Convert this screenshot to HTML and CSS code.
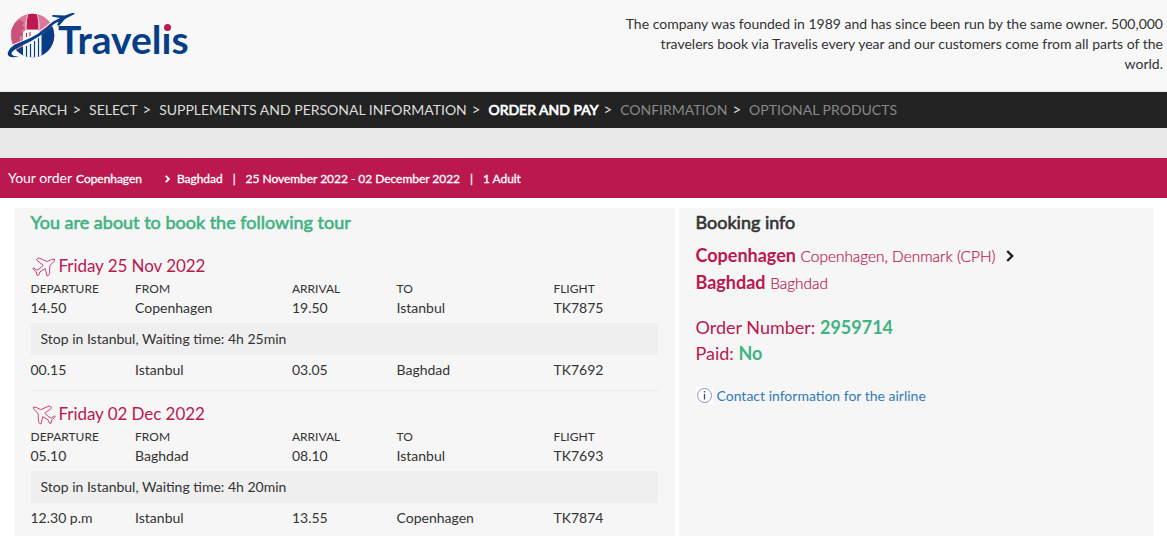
FILE: index.html
```
<!DOCTYPE html>
<html lang="en">
<head>
    <meta charset="UTF-8">
    <meta name="viewport" content="width=device-width, initial-scale=1.0">
    <title>Travelis - Order and pay</title>
    <link rel="stylesheet" href="styles.css">
</head>
<body>

<svg class="symbols" width="0" height="0">
    <symbol id="plane" viewBox="0 0 24 20">
        <path d="M0.8 11.5 Q1 10.6 2 11 L4.5 13 L6.8 12.2 L11.2 8.3 L4.5 3 Q5 0.8 7 1 L15.2 4.6 Q20 1.8 22.5 2 Q23.5 3.5 20 6.5 L17.8 8.5 L17.5 16.5 Q16.8 19 15 19 L13.2 11.6 L8 14.8 L6.6 18.2 L5 18.3 L4.2 15 Z"/>
    </symbol>
    <symbol id="chevron" viewBox="0 0 8 12">
        <path d="M1.2 1 L6.2 6 L1.2 11"/>
    </symbol>
</svg>

<header class="header">
    <a class="logo" href="#">
        <svg class="logo-mark" width="70" height="50" viewBox="0 0 70 50">
            <defs>
                <clipPath id="globe"><circle cx="25.5" cy="25.5" r="21.8"/></clipPath>
            </defs>
            <g clip-path="url(#globe)">
                <rect x="3" y="3" width="46" height="46" fill="#d97898"/>
                <path d="M4 20 L8 13 L13 10 L17 12 L15 16 L18 18 L14 21 L17 25 L12 27 L13 32 L6 36 Z" fill="#c9517b"/>
                <path d="M20 3 L31 3 L32 19 L19 19 Z" fill="#bd1a50"/>
                <path d="M21 3 Q18.5 10 19 20 M30 3 Q32.5 10 32 20" fill="none" stroke="#f8f8f8" stroke-width="0.9"/>
                <path d="M7 41 Q28 32 50 12 L50 50 L7 50 Z" fill="#053d87"/>
                <path d="M16 48 L16 23 Q17 20 20 20 L31 20 L34.5 23 L34.5 48 Z" fill="#f8f8f8"/>
                <path d="M19.5 23 V27 M23 22 V27" stroke="#bd1a50" stroke-width="1"/>
                <path d="M19.5 36 V47 M23.5 34 V47 M27.5 31 V47 M31.5 28 V47" stroke="#053d87" stroke-width="1.2"/>
                <path d="M4 35.5 Q28 27 48 9" fill="none" stroke="#f8f8f8" stroke-width="1"/>
            </g>
            <path d="M12 46.5 Q0 49 0.8 42.5 Q3 36 13 32.5 Q33 25 46 11.5 L53 8 L45 6.5 L45.5 5 L58 5.5 L65 3 Q68.5 2.5 67.5 4 L58 9 L52.5 15.5 L50 15.5 L51.5 11.5 L47 14 Q34 27.5 14 36 Q3.5 41.5 4.5 44 Q5.5 46.5 12 46.5 Z" fill="#053d87"/>
        </svg>
        <span class="logo-text">Travel<span class="logo-i">ı</span>s</span>
    </a>
    <p class="intro">The company was founded in 1989 and has since been run by the same owner. 500,000<br>travelers book via Travelis every year and our customers come from all parts of the<br>world.</p>
</header>

<nav class="steps">
    <span class="step">SEARCH</span>
    <span class="step">SELECT</span>
    <span class="step">SUPPLEMENTS AND PERSONAL INFORMATION</span>
    <span class="step active">ORDER AND PAY</span>
    <span class="step disabled">CONFIRMATION</span>
    <span class="step disabled">OPTIONAL PRODUCTS</span>
</nav>

<div class="order-bar">
    <span class="order-title">Your order</span>
    <span>Copenhagen</span>
    <svg class="chevron chevron-small"><use href="#chevron"/></svg>
    <span>Baghdad</span>
    <span class="divider">|</span>
    <span>25 November 2022 - 02 December 2022</span>
    <span class="divider">|</span>
    <span>1 Adult</span>
</div>

<main class="content">
    <section class="panel tour">
        <h2 class="tour-title">You are about to book the following tour</h2>

        <div class="trip">
            <h3 class="trip-date"><svg class="plane"><use href="#plane"/></svg>Friday 25 Nov 2022</h3>
            <div class="row row-head">
                <span>DEPARTURE</span><span>FROM</span><span>ARRIVAL</span><span>TO</span><span>FLIGHT</span>
            </div>
            <div class="row">
                <span>14.50</span><span>Copenhagen</span><span>19.50</span><span>Istanbul</span><span>TK7875</span>
            </div>
            <div class="stop">Stop in Istanbul, Waiting time: 4h 25min</div>
            <div class="row">
                <span>00.15</span><span>Istanbul</span><span>03.05</span><span>Baghdad</span><span>TK7692</span>
            </div>
        </div>

        <div class="trip">
            <h3 class="trip-date"><svg class="plane plane-return"><use href="#plane"/></svg>Friday 02 Dec 2022</h3>
            <div class="row row-head">
                <span>DEPARTURE</span><span>FROM</span><span>ARRIVAL</span><span>TO</span><span>FLIGHT</span>
            </div>
            <div class="row">
                <span>05.10</span><span>Baghdad</span><span>08.10</span><span>Istanbul</span><span>TK7693</span>
            </div>
            <div class="stop">Stop in Istanbul, Waiting time: 4h 20min</div>
            <div class="row">
                <span>12.30 p.m</span><span>Istanbul</span><span>13.55</span><span>Copenhagen</span><span>TK7874</span>
            </div>
        </div>
    </section>

    <aside class="panel booking">
        <h2 class="booking-title">Booking info</h2>
        <div class="place"><strong>Copenhagen</strong> <small>Copenhagen, Denmark (CPH)</small><svg class="chevron"><use href="#chevron"/></svg></div>
        <div class="place"><strong>Baghdad</strong> <small>Baghdad</small></div>
        <div class="order-info">
            <div>Order Number: <b>2959714</b></div>
            <div>Paid: <b>No</b></div>
        </div>
        <a class="contact" href="#">
            <svg class="info-icon" width="17" height="17" viewBox="0 0 17 17">
                <rect width="17" height="17" fill="#fff"/>
                <circle cx="8.5" cy="8.5" r="7" fill="none" stroke="#8292c8" stroke-width="1"/>
                <path d="M8.5 4 V5.5 M8.5 7 V12.5" fill="none" stroke="#2c4c9c" stroke-width="1.3"/>
            </svg>
            <span>Contact information for the airline</span>
        </a>
    </aside>
</main>

</body>
</html>
```
FILE: styles.css
```
* {
    box-sizing: border-box;
}
body {
    font-family: Lato, "Liberation Sans", sans-serif;
    font-size: 14px;
    line-height: 20px;
    color: #333;
    background-color: #fff;
    margin: 0;
    height: 536px;
    overflow: hidden;
}
h2, h3, p {
    margin: 0;
}
a {
    text-decoration: none;
}
.symbols {
    display: block;
}
.header {
    display: flex;
    justify-content: space-between;
    height: 92px;
    padding: 0 4px 0 7px;
    background-color: #f8f8f8;
    border-bottom: 1px solid #e7e7e7;
}
.logo {
    display: flex;
    padding-top: 10px;
}
.logo-mark {
    display: block;
    margin-right: -19px;
}
.logo-text {
    font-size: 39px;
    line-height: 59px;
    font-weight: bold;
    color: #053d87;
    white-space: nowrap;
}
.logo-i {
    position: relative;
}
.logo-i::after {
    content: "";
    position: absolute;
    left: 2px;
    top: 8px;
    width: 7px;
    height: 7px;
    border-radius: 50%;
    background-color: #bd1a50;
}
.intro {
    padding-top: 14px;
    text-align: right;
    white-space: nowrap;
}
.steps {
    display: flex;
    height: 36px;
    padding-left: 13.5px;
    line-height: 35px;
    color: #ddd;
    background-color: #222;
    white-space: nowrap;
}
.step:not(:last-child)::after {
    content: ">";
    margin: 0 8px 0 5px;
    font-size: 15px;
    color: #ddd;
    -webkit-text-stroke: 0;
}
.active {
    color: #fff;
    -webkit-text-stroke: 0.7px;
}
.disabled {
    color: #888;
}
.order-bar {
    display: flex;
    align-items: baseline;
    height: 70px;
    padding-left: 8px;
    border-top: 30px solid #e9e9e9;
    background-color: #bb1850;
    color: #fff;
    font-size: 12px;
    line-height: 39px;
    letter-spacing: -0.04px;
    -webkit-text-stroke: 0.3px;
    white-space: nowrap;
}
.order-title {
    margin-right: 4px;
    font-size: 14px;
    -webkit-text-stroke: 0;
}
.chevron {
    width: 8px;
    height: 12px;
    margin-left: 11px;
    fill: none;
    stroke: #222;
    stroke-width: 2.4;
}
.chevron-small {
    width: 5px;
    height: 8px;
    margin: 0 7px 0 23px;
    stroke: #fff;
    stroke-width: 3;
}
.divider {
    margin: 0 10px;
}
.content {
    display: grid;
    grid-template-columns: 661px 475px;
    gap: 4px;
    padding: 10px 13px 0 14px;
}
.panel {
    height: 328px;
    background-color: #f6f6f6;
    padding: 4px 17px 0 16.5px;
}
.tour-title, .booking-title {
    font-size: 18px;
    line-height: 20px;
    font-weight: normal;
    -webkit-text-stroke: 0.6px;
}
.tour-title {
    color: #42b282;
}
.trip {
    height: 148px;
    padding-top: 10px;
    border-top: 1px solid #ebebeb;
}
.tour-title + .trip {
    margin-top: 10px;
    border-top-color: transparent;
}
.trip-date {
    display: flex;
    height: 26px;
    padding-left: 1px;
    font-size: 17px;
    line-height: 25px;
    font-weight: normal;
    letter-spacing: -0.06px;
    color: #bb1850;
}
.plane {
    width: 24px;
    height: 20px;
    margin: 4px 3px 0 0;
    fill: none;
    stroke: #cb4574;
    stroke-width: 1;
}
.plane-return {
    transform: scaleX(-1);
}
.row {
    display: grid;
    grid-template-columns: 2fr 3fr 2fr 3fr 2fr;
    height: 20px;
    line-height: 21px;
}
.row-head {
    height: 18px;
    font-size: 12px;
    line-height: 20px;
}
.stop {
    height: 32px;
    margin: 6px 0 4px;
    padding-left: 10px;
    line-height: 32px;
    background-color: #efefef;
}
.booking-title {
    margin-bottom: 10px;
}
.place, .order-info {
    font-size: 18px;
    line-height: 26px;
    color: #bb1850;
    white-space: nowrap;
}
.place small {
    font-size: 15.4px;
    font-weight: 300;
    -webkit-text-stroke: 0.2px;
}
.order-info {
    margin-top: 18px;
}
.order-info b {
    color: #42b282;
}
.contact {
    display: flex;
    gap: 4px;
    margin-top: 20px;
    color: #337ab7;
}
.info-icon {
    margin-top: 1px;
}
```
